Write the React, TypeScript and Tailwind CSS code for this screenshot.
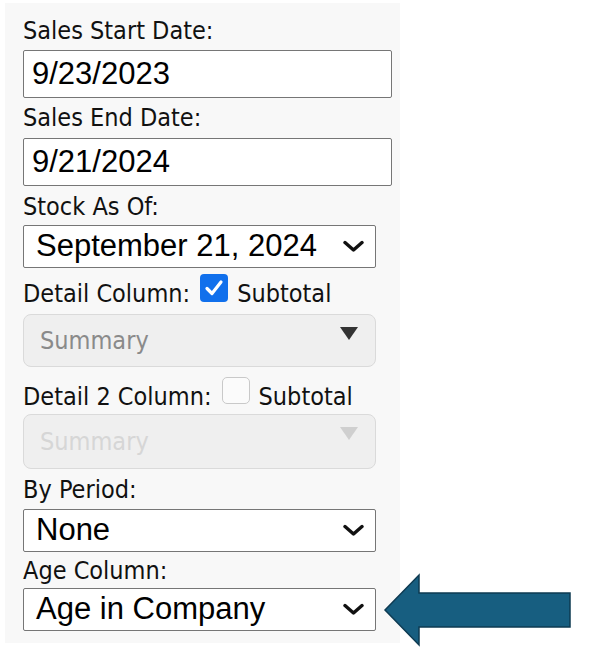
import React from "react";

const labelFont = { fontFamily: '"DejaVu Sans Condensed", "DejaVu Sans", sans-serif' };
const fieldFont = { fontFamily: '"Liberation Sans", Arial, sans-serif' };

function Chevron() {
  return (
    <svg width="21" height="13" viewBox="0 0 21 13" className="shrink-0">
      <path d="M2 2.5 L10.5 10 L19 2.5" fill="none" stroke="#111" strokeWidth="3.4" strokeLinecap="round" strokeLinejoin="round" />
    </svg>
  );
}

function Label({ children, className = "" }: { children: React.ReactNode; className?: string }) {
  return (
    <div className={`h-[28px] text-[25px] leading-[28px] text-[#111] ${className}`} style={labelFont}>
      {children}
    </div>
  );
}

function DateInput({ value, className = "" }: { value: string; className?: string }) {
  return (
    <div
      className={`flex items-center w-[369px] h-[48px] bg-white border-[1.5px] border-[#767676] rounded-[2px] pl-[8px] text-[31px] text-black ${className}`}
      style={fieldFont}
    >
      {value}
    </div>
  );
}

function Select({ value, className = "" }: { value: string; className?: string }) {
  return (
    <div
      className={`flex items-center justify-between w-[353px] h-[43px] bg-white border-[1.5px] border-[#767676] rounded-[2px] pl-[12px] pr-[11px] text-[31px] text-black ${className}`}
      style={fieldFont}
    >
      <span>{value}</span>
      <Chevron />
    </div>
  );
}

function DisabledSelect({ text, faded, className = "" }: { text: string; faded?: boolean; className?: string }) {
  return (
    <div
      className={`relative flex items-center w-[353px] h-[53px] bg-[#efefef] border-[1.5px] border-[#dadada] rounded-[8px] pl-[16px] text-[25px] ${
        faded ? "text-[#d6d6d6]" : "text-[#8a8a8a]"
      } ${className}`}
      style={labelFont}
    >
      {text}
      <svg width="18" height="13" viewBox="0 0 18 13" className="absolute right-[17px] top-[12px]">
        <path d="M0 0 H18 L9 13 Z" fill={faded ? "#cfcfcf" : "#333"} />
      </svg>
    </div>
  );
}

function CheckRow({ label, checked, className = "" }: { label: string; checked: boolean; className?: string }) {
  return (
    <div className={`flex items-center h-[28px] text-[25px] leading-[28px] text-[#111] ${className}`} style={labelFont}>
      <span>{label}</span>
      {checked ? (
        <span className="ml-[10px] mb-[12px] flex items-center justify-center w-[28px] h-[28px] rounded-[4px] bg-[#1170ec]">
          <svg width="20" height="18" viewBox="0 0 20 18">
            <path d="M3 9.5 L8 14.5 L17 3" fill="none" stroke="#fff" strokeWidth="3.2" strokeLinecap="round" strokeLinejoin="round" />
          </svg>
        </span>
      ) : (
        <span className="ml-[10px] mb-[14px] w-[28px] h-[27px] rounded-[5px] bg-[#fbfbfb] border-[1.5px] border-[#c9c9c9]" />
      )}
      <span className="ml-[9px]">Subtotal</span>
    </div>
  );
}

export default function App() {
  return (
    <div className="relative w-[592px] h-[658px] bg-white overflow-hidden">
      <div className="ml-[5px] mt-[3px] w-[395px] h-[640px] bg-[#f8f8f8] pl-[18px] pt-[14px] flex flex-col">
        <Label>Sales Start Date:</Label>
        <DateInput value="9/23/2023" className="mt-[5px] h-[47px]" />
        <Label className="mt-[6px]">Sales End Date:</Label>
        <DateInput value="9/21/2024" className="mt-[6px]" />
        <Label className="mt-[7px]">Stock As Of:</Label>
        <Select value="September 21, 2024" className="mt-[4px] h-[42px]" />
        <CheckRow label="Detail Column:" checked className="mt-[12px]" />
        <DisabledSelect text="Summary" className="mt-[6px] h-[52px]" />
        <CheckRow label="Detail 2 Column:" checked={false} className="mt-[16px]" />
        <DisabledSelect text="Summary" faded className="mt-[3px] h-[55px]" />
        <Label className="mt-[7px]">By Period:</Label>
        <Select value="None" className="mt-[5px] h-[42px]" />
        <Label className="mt-[5px]">Age Column:</Label>
        <Select value="Age in Company" className="mt-[3px]" />
      </div>

      {/* callout arrow pointing at Age Column */}
      <svg className="absolute left-0 top-0" width="592" height="658" viewBox="0 0 592 658">
        <polygon
          points="385,610 419,575 419,593 570,593 570,627 419,627 419,645"
          fill="#175e80"
          stroke="#0e3b52"
          strokeWidth="1.5"
          strokeLinejoin="miter"
        />
      </svg>
    </div>
  );
}
